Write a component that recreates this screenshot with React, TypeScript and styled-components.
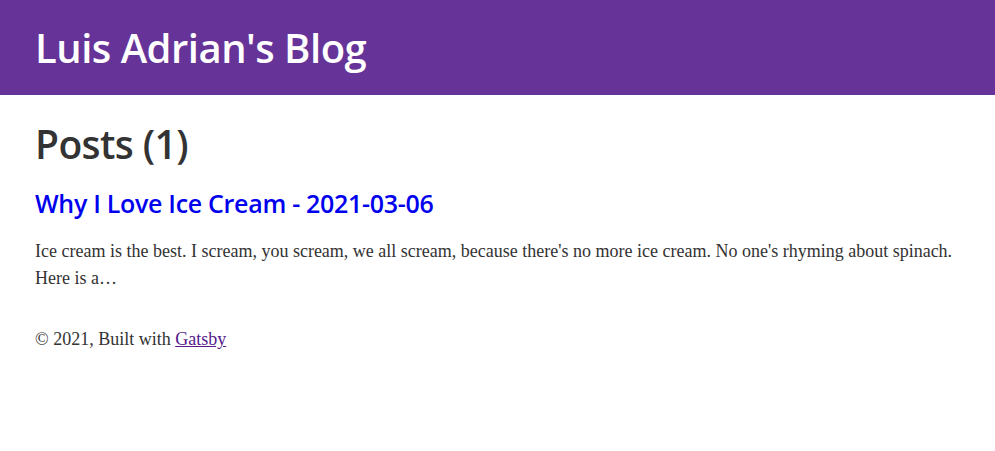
import React from "react";
import styled, { createGlobalStyle } from "styled-components";

const Global = createGlobalStyle`
  html, body { margin: 0; padding: 0; background: #fff; }
  body { font-family: "Liberation Serif", "Times New Roman", serif; color: #333; }
`;

const Header = styled.header`
  background: #663399;
  height: 95px;
  display: flex;
  align-items: center;
  padding: 0 35px;
  box-sizing: border-box;
`;

const Title = styled.h1`
  margin: 0;
  font-family: "Open Sans", sans-serif;
  font-weight: 600;
  font-size: 40px;
  color: #fff;
  letter-spacing: -0.5px;
`;

const Main = styled.main`
  padding: 0 35px;
`;

const Heading = styled.h2`
  margin: 26px 0 0;
  font-family: "Open Sans", sans-serif;
  font-weight: 600;
  font-size: 39px;
  line-height: 46px;
  color: #333;
  letter-spacing: -0.6px;
`;

const PostLink = styled.a`
  display: block;
  margin-top: 20px;
  font-family: "Open Sans", sans-serif;
  font-weight: 600;
  font-size: 25px;
  line-height: 32px;
  color: #0000ee;
  text-decoration: none;
  letter-spacing: -0.3px;
`;

const Excerpt = styled.p`
  margin: 19px 0 0;
  font-size: 18px;
  line-height: 27px;
  color: #333;
`;

const Footer = styled.footer`
  margin-top: 34px;
  font-size: 18px;
  line-height: 27px;
  color: #333;
  a { color: #551a8b; }
`;

export default function App() {
  return (
    <>
      <Global />
      <Header>
        <Title>Luis Adrian's Blog</Title>
      </Header>
      <Main>
        <Heading>Posts (1)</Heading>
        <PostLink href="#">Why I Love Ice Cream - 2021-03-06</PostLink>
        <Excerpt>
          Ice cream is the best. I scream, you scream, we all scream, because there's no more ice cream. No one's rhyming about spinach. Here is a…
        </Excerpt>
        <Footer>
          © 2021, Built with <a href="#">Gatsby</a>
        </Footer>
      </Main>
    </>
  );
}
